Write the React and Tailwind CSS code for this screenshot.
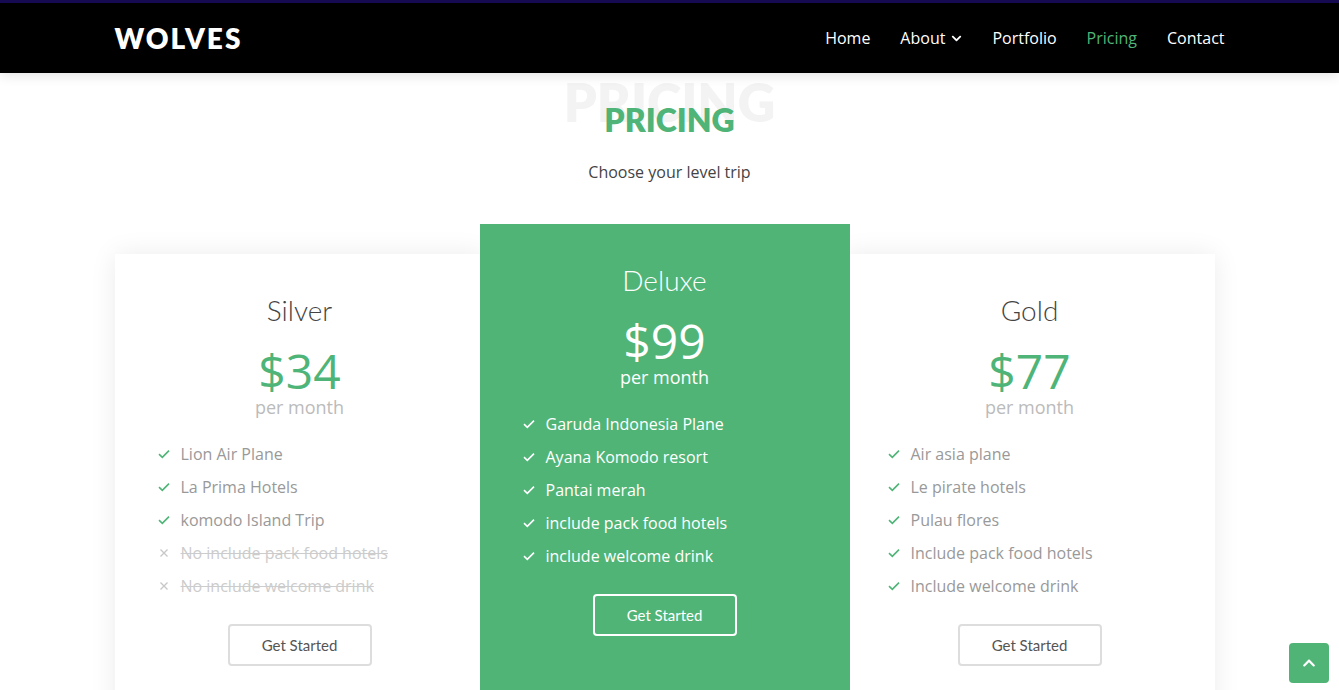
import React from "react";
import { FaChevronDown, FaChevronUp } from "react-icons/fa";

const plans = [
  {
    name: "Silver",
    price: "$34",
    featured: false,
    items: [
      { text: "Lion Air Plane", ok: true },
      { text: "La Prima Hotels", ok: true },
      { text: "komodo Island Trip", ok: true },
      { text: "No include pack food hotels", ok: false },
      { text: "No include welcome drink", ok: false },
    ],
  },
  {
    name: "Deluxe",
    price: "$99",
    featured: true,
    items: [
      { text: "Garuda Indonesia Plane", ok: true },
      { text: "Ayana Komodo resort", ok: true },
      { text: "Pantai merah", ok: true },
      { text: "include pack food hotels", ok: true },
      { text: "include welcome drink", ok: true },
    ],
  },
  {
    name: "Gold",
    price: "$77",
    featured: false,
    items: [
      { text: "Air asia plane", ok: true },
      { text: "Le pirate hotels", ok: true },
      { text: "Pulau flores", ok: true },
      { text: "Include pack food hotels", ok: true },
      { text: "Include welcome drink", ok: true },
    ],
  },
];

const Check = ({ className }) => (
  <svg viewBox="0 0 12 10" className={className} fill="none">
    <path d="M1 5.2 L4.3 8.3 L11 1.6" stroke="currentColor" strokeWidth="1.6" />
  </svg>
);

const Cross = ({ className }) => (
  <svg viewBox="0 0 10 10" className={className} fill="none">
    <path d="M1.5 1.5 L8.5 8.5 M8.5 1.5 L1.5 8.5" stroke="currentColor" strokeWidth="1.4" />
  </svg>
);

const Card = ({ plan }) => {
  const f = plan.featured;
  return (
    <div
      className={`w-[370px] shrink-0 ${
        f
          ? "bg-[#50b477] text-white relative z-10 -mx-[5px] -mt-[30px] h-[500px]"
          : "bg-white h-[470px] shadow-[0_0_25px_rgba(0,0,0,0.08)]"
      }`}
    >
      <h3
        className={`mt-[39px] text-center text-[28px] leading-[34px] font-light font-['Lato',sans-serif] ${
          f ? "text-white" : "text-[#444]"
        }`}
      >
        {plan.name}
      </h3>
      <div
        className={`mt-[20px] text-center text-[48px] leading-[48px] ${
          f ? "text-white" : "text-[#4fb477]"
        }`}
      >
        {plan.price}
      </div>
      <div
        className={`text-center text-[18px] leading-[24px] ${
          f ? "text-white font-medium" : "text-[#bbb]"
        }`}
      >
        per month
      </div>
      <ul className="mt-[18.5px] pl-[43px]">
        {plan.items.map((it) => (
          <li key={it.text} className="flex items-center h-[33px]">
            {it.ok ? (
              <Check
                className={`w-[12px] h-[10px] mr-[11px] ${
                  f ? "text-white" : "text-[#4fb477]"
                }`}
              />
            ) : (
              <Cross className="w-[10px] h-[10px] ml-[1px] mr-[12px] text-[#c8c8c8]" />
            )}
            <span
              className={`text-[16px] ${
                f
                  ? "text-white font-medium"
                  : it.ok
                  ? "text-[#999]"
                  : "text-[#ccc] line-through"
              }`}
            >
              {it.text}
            </span>
          </li>
        ))}
      </ul>
      <div className="mt-[21.5px] flex justify-center">
        <button
          className={`w-[144px] h-[42px] rounded-[4px] border-2 text-[15px] font-['Lato',sans-serif] ${
            f ? "border-white text-white" : "border-[#ddd] text-[#555]"
          }`}
        >
          Get Started
        </button>
      </div>
    </div>
  );
};

export default function App() {
  return (
    <div className="h-[690px] overflow-hidden bg-white font-['Open_Sans',sans-serif]">
      <nav className="relative z-20 h-[73px] bg-black border-t-[3px] border-[#160b52] shadow-[0_2px_12px_rgba(0,0,0,0.12)]">
        <div className="w-[1110px] mx-auto h-full flex items-center justify-between">
          <span className="text-white text-[28px] font-extrabold tracking-[2px] font-['Lato',sans-serif] leading-none -mt-[1px]">
            WOLVES
          </span>
          <ul className="flex items-center gap-[30px] text-[16px] text-white">
            <li>Home</li>
            <li className="flex items-center gap-[6px]">
              About <FaChevronDown className="w-[11px] h-[11px]" />
            </li>
            <li>Portfolio</li>
            <li className="text-[#4fb477]">Pricing</li>
            <li>Contact</li>
          </ul>
        </div>
      </nav>

      <section>
        <div className="relative flex flex-col items-center">
          <span className="absolute -top-[1px] left-0 right-0 text-center text-[52px] leading-[60px] font-extrabold text-[#f3f3f3] font-['Lato',sans-serif]">
            PRICING
          </span>
          <h2 className="relative mt-[27px] text-[32px] leading-[40px] font-extrabold text-[#4fb477] font-['Lato',sans-serif]">
            PRICING
          </h2>
          <p className="relative mt-[20px] text-[16px] leading-[24px] text-[#444]">
            Choose your level trip
          </p>
        </div>
        <div className="mt-[70px] w-[1110px] mx-auto flex items-start">
          {plans.map((p) => (
            <Card key={p.name} plan={p} />
          ))}
        </div>
      </section>

      <button className="fixed right-[10px] bottom-[7px] w-[40px] h-[40px] rounded-[4px] bg-[#50b477] flex items-center justify-center text-white">
        <FaChevronUp className="w-[14px] h-[14px]" />
      </button>
    </div>
  );
}
